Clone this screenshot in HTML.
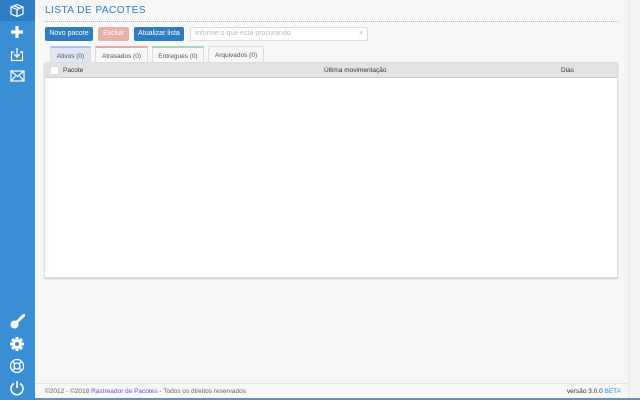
<!DOCTYPE html>
<html><head><meta charset="utf-8"><style>
*{margin:0;padding:0;box-sizing:border-box}
body{width:640px;height:400px;overflow:hidden;background:#f7f7f7;font-family:"Liberation Sans",sans-serif;position:relative}
.sb{position:absolute;left:0;top:0;width:35px;height:400px;background:#3a8ed5}
.sb .top{position:absolute;left:0;top:0;width:35px;height:21px;background:#2d7dc4}
.sb svg{position:absolute}
.scroll{position:absolute;right:0;top:0;width:12px;height:400px;background:#f3f3f3;border-left:1px solid #e8e8e8}
h1{position:absolute;left:45px;top:5px;font-size:10px;font-weight:normal;color:#2d7dc4;letter-spacing:.5px}
.dots{position:absolute;left:45px;top:21px;width:573px;border-top:1px dotted #9bb3cf}
.btn{position:absolute;top:27px;height:14px;font-size:7px;color:#fff;line-height:14px;text-align:center;border-radius:2px}
.search{position:absolute;left:190px;top:27px;width:178px;height:14px;background:#fff;border:1px solid #ddd;border-radius:2px;font-size:7px;color:#bbb;line-height:12px;padding-left:4px}
.tab{position:absolute;top:46px;height:17px;font-size:6.5px;color:#555;line-height:17px;text-align:center;background:#f7f7f7;border:1px solid #ddd;border-bottom:none}
.table{position:absolute;left:44px;top:62px;width:574px;height:216px;background:#fff;border:1px solid #ddd;box-shadow:0 1px 1px #ccc}
.th{height:15px;background:#e2e2e2;border-bottom:1px solid #ccc;font-size:6.5px;color:#333;line-height:15px;position:relative}
.th span{position:absolute}
.foot{position:absolute;left:35px;top:383px;width:593px;height:15px;border-top:1px solid #e5e5e5;font-size:6.5px;color:#666;line-height:16px}
.bar{position:absolute;left:35px;top:398px;width:605px;height:2px;background:#6f8fb0}
</style></head><body>
<div class="sb"><div class="top"></div>
<svg style="left:9px;top:3px" width="16" height="15" viewBox="0 0 16 15" fill="none" stroke="#fff" stroke-width="1.2"><path d="M2 4L8 1.5L14 4V11L8 13.5L2 11Z M2 4L8 6.5L14 4 M8 6.5V13.5 M5 2.8L11 5.3"/></svg>
<svg style="left:10px;top:25px" width="14" height="14"><path d="M7 1V13M1 7H13" stroke="#fff" stroke-width="3.2"/></svg>
<svg style="left:10px;top:47px" width="14" height="15" fill="none" stroke="#fff" stroke-width="1.2"><path d="M4 5H1.5V13.5H12.5V5H10 M7 1V10 M4 7L7 10L10 7"/></svg>
<svg style="left:10px;top:70px" width="15" height="12" fill="none" stroke="#fff" stroke-width="1.2"><rect x="1" y="1" width="13" height="10"/><path d="M1 1L7.5 6.5L14 1 M1 11L5.5 6 M14 11L9.5 6"/></svg>
<svg style="left:9px;top:314px" width="16" height="16"><path d="M15 1L8 8" stroke="#fff" stroke-width="3" stroke-linecap="round"/><circle cx="5.5" cy="10.5" r="4" fill="#fff"/></svg>
<svg style="left:10px;top:337px" width="14" height="14" viewBox="0 0 14 14"><g fill="#fff"><circle cx="7" cy="7" r="5"/><rect x="5.5" y="0" width="3" height="14"/><rect x="0" y="5.5" width="14" height="3"/><rect x="5.5" y="0" width="3" height="14" transform="rotate(45 7 7)"/><rect x="5.5" y="0" width="3" height="14" transform="rotate(-45 7 7)"/></g><circle cx="7" cy="7" r="2" fill="#3a8ed5"/></svg>
<svg style="left:9px;top:358px" width="16" height="16" fill="none" stroke="#fff" stroke-width="1.3"><circle cx="8" cy="8" r="6.5"/><circle cx="8" cy="8" r="3"/><path d="M3.5 3.5L6 6M12.5 3.5L10 6M3.5 12.5L6 10M12.5 12.5L10 10"/></svg>
<svg style="left:9px;top:380px" width="16" height="16" fill="none" stroke="#fff" stroke-width="1.6"><path d="M5 3.5A6 6 0 1 0 11 3.5M8 1V8"/></svg>
</div>
<div class="scroll"></div>
<h1>LISTA DE PACOTES</h1>
<div class="dots"></div>
<div class="btn" style="left:45px;width:48px;background:#2d7dc4">Novo pacote</div>
<div class="btn" style="left:98px;width:31px;background:#eab0a7">Excluir</div>
<div class="btn" style="left:134px;width:50px;background:#2d7dc4">Atualizar lista</div>
<div class="search">Informe o que esta procurando<span style="position:absolute;right:4px;color:#aaa">⌕</span></div>
<div class="tab" style="left:50px;width:41px;background:#dde6f2;border-top:2px solid #aac3e0">Ativos (0)</div>
<div class="tab" style="left:95px;width:53px;border-top:2px solid #e8a9a2">Atrasados (0)</div>
<div class="tab" style="left:152px;width:52px;border-top:2px solid #a9d6b4">Entregues (0)</div>
<div class="tab" style="left:208px;width:56px">Arquivados (0)</div>
<div class="table"><div class="th"><span style="left:5px;top:3px;width:9px;height:9px;background:#fff;border:1px solid #ddd"></span><span style="left:18px">Pacote</span><span style="left:279px">Última movimentação</span><span style="left:516px">Dias</span></div></div>
<div class="foot"><span style="position:absolute;left:10px">©2012 - ©2018 <span style="color:#6a4ee8">Rastreador de Pacotes</span> - Todos os direitos reservados</span><span style="position:absolute;right:7px;color:#333">versão 3.0.0 <span style="color:#2d8fe6">BETA</span></span></div>
<div class="bar"></div>
</body></html>
